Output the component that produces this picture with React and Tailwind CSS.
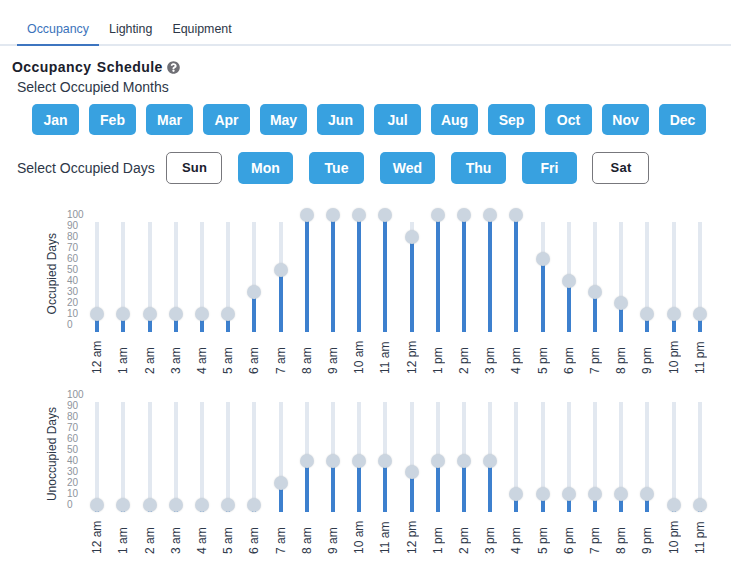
import React from "react";
import { FaQuestionCircle } from "react-icons/fa";

const months = ["Jan","Feb","Mar","Apr","May","Jun","Jul","Aug","Sep","Oct","Nov","Dec"];
const hours = ["12 am","1 am","2 am","3 am","4 am","5 am","6 am","7 am","8 am","9 am","10 am","11 am","12 pm","1 pm","2 pm","3 pm","4 pm","5 pm","6 pm","7 pm","8 pm","9 pm","10 pm","11 pm"];
const occupied = [10,10,10,10,10,10,30,50,100,100,100,100,80,100,100,100,100,60,40,30,20,10,10,10];
const unoccupied = [0,0,0,0,0,0,0,20,40,40,40,40,30,40,40,40,10,10,10,10,10,10,0,0];
const ticks = [100,90,80,70,60,50,40,30,20,10,0];

function Slider({ value }) {
  const thumbCenter = 110 - (value * 1.1 + 7);
  return (
    <div className="relative mx-auto h-[110px] w-1 bg-[#e2e8f0]">
      <div className="absolute bottom-0 left-0 w-1 bg-[#3d80ce]" style={{ height: 110 - thumbCenter }} />
      <div className="absolute left-[-5px] h-3.5 w-3.5 rounded-full bg-[#cbd5e0] shadow-[0_0_2px_rgba(0,0,0,0.12)]" style={{ top: thumbCenter - 7 }} />
    </div>
  );
}

function Chart({ title, values, className }) {
  return (
    <div className={`flex ${className}`}>
      <div className="flex h-[130px] w-[40px] items-center justify-end">
        <span className="mr-[-2px] [writing-mode:vertical-rl] rotate-180 text-xs leading-none text-[#2d3748]">{title}</span>
      </div>
      <div className="ml-[11px] flex h-[121px] w-[22px] flex-col items-start">
        {ticks.map((t) => (
          <div key={t} className="h-[11px] text-[10px] leading-[11px] text-[#8e949c]">{t}</div>
        ))}
      </div>
      <div className="ml-[-5px] grid w-[629px] grid-cols-24">
        {values.map((v, i) => (
          <div key={i} className="flex flex-col items-center">
            <div className="mt-[13px]"><Slider value={v} /></div>
            <div className="mt-[8px] h-[34px] w-full flex justify-center">
              <span className="[writing-mode:vertical-rl] rotate-180 whitespace-nowrap text-xs leading-none text-[#2d3748]">{hours[i]}</span>
            </div>
          </div>
        ))}
      </div>
    </div>
  );
}

export default function App() {
  return (
    <div className="h-[578px] w-[731px] overflow-hidden bg-white font-['Liberation_Sans',Arial,sans-serif] text-[#2d3748]">
      <div className="flex border-b-2 border-[#e2e8f0] pl-[17px] pt-[18px]">
        <div className="mb-[-2px] border-b-2 border-[#3d75c0] px-2.5 pb-1 text-[12.4px] leading-[22px] text-[#3b73bb]">Occupancy</div>
        <div className="px-2.5 pb-1 text-[12.4px] leading-[22px] text-[#2d3748]">Lighting</div>
        <div className="px-2.5 pb-1 text-[12.4px] leading-[22px] text-[#2d3748]">Equipment</div>
      </div>

      <div className="ml-3 mt-[12px] flex h-[18px] items-center gap-1">
        <h2 className="text-sm font-bold leading-[18px] tracking-[0.45px] [word-spacing:1px] text-[#1a202c]">Occupancy Schedule</h2>
        <FaQuestionCircle className="h-[13px] w-[13px] text-[#6f6f75]" />
      </div>

      <div className="ml-[17px] mt-[3px] text-sm leading-[17px] text-[#2d3748]">Select Occupied Months</div>

      <div className="ml-8 mt-[8px] flex gap-2.5">
        {months.map((m) => (
          <button key={m} className="h-[31px] w-[47px] rounded-[5px] bg-[#38a1e0] text-sm font-bold text-white">{m}</button>
        ))}
      </div>

      <div className="ml-[17px] mt-[17px] flex items-center">
        <div className="w-[149px] text-sm text-[#2d3748]">Select Occupied Days</div>
        <div className="flex gap-4">
          <button className="h-8 w-14 rounded-[5px] border border-[#77777c] bg-white pl-px text-[13px] font-bold tracking-[0.2px] text-[#1a202c]">Sun</button>
          {["Mon","Tue","Wed","Thu","Fri"].map((d) => (
            <button key={d} className="h-8 w-[55px] rounded-[5px] bg-[#38a1e0] text-sm font-bold text-white">{d}</button>
          ))}
          <button className="ml-[-1px] h-8 w-[57px] rounded-[5px] border border-[#77777c] bg-white pl-px text-[13px] font-bold tracking-[0.2px] text-[#1a202c]">Sat</button>
        </div>
      </div>

      <Chart title="Occupied Days" values={occupied} className="ml-[16px] mt-[25px]" />
      <Chart title="Unoccupied Days" values={unoccupied} className="ml-[16px] mt-[15px]" />
    </div>
  );
}
